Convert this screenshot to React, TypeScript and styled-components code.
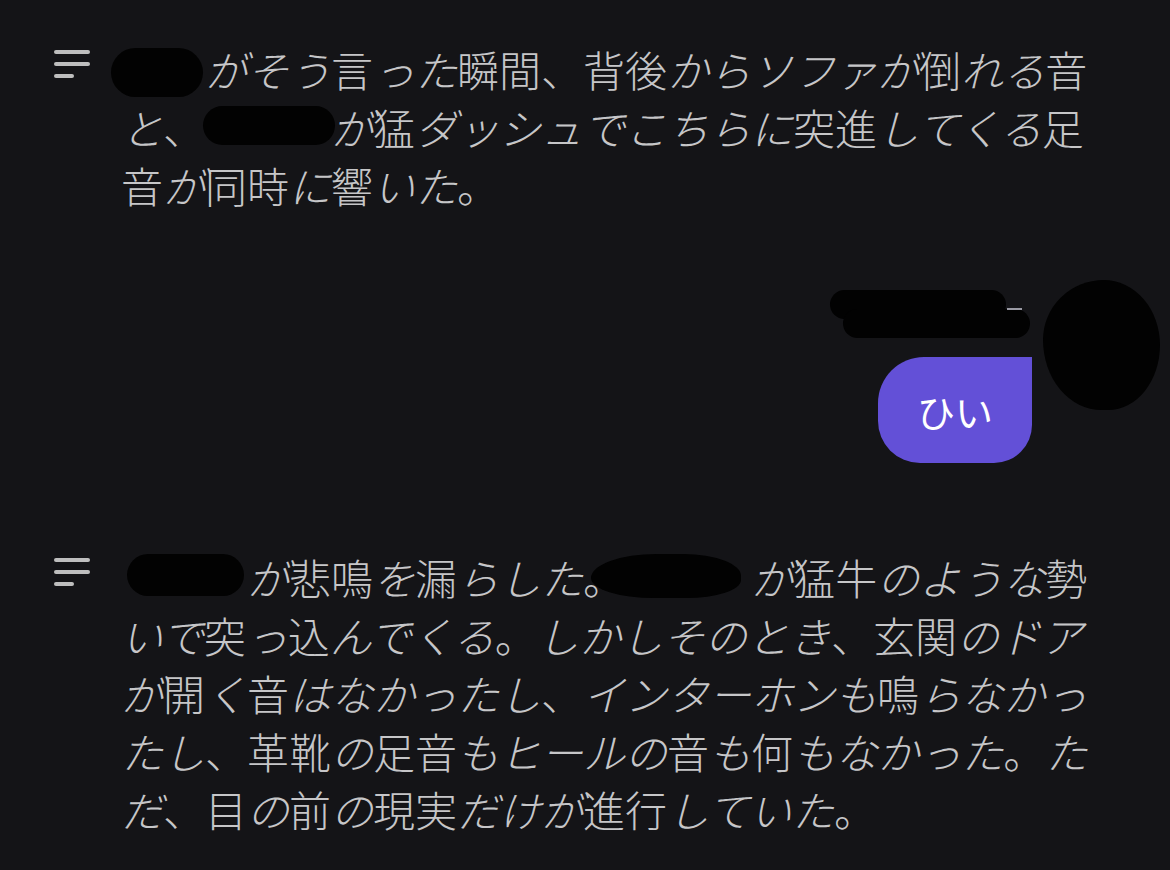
import React from "react"
import styled, { createGlobalStyle } from "styled-components"

const GlobalStyle = createGlobalStyle`
  html, body {
    margin: 0;
    padding: 0;
    background: #141417;
  }
  body {
    font-family: "Noto Sans CJK JP", "Noto Sans", sans-serif;
    color: #c6c6c8;
  }
`

// kana runs are drawn slanted, kanji and punctuation stay upright
const KANA = /([\u3041-\u3096\u309B-\u309F\u30A1-\u30FA\u30FC-\u30FF]+)/

const renderMixed = (text: string) =>
  text.split(KANA).map((part, i) =>
    KANA.test(part) ? <Kana key={i}>{part}</Kana> : <React.Fragment key={i}>{part}</React.Fragment>
  )

interface IRedact {
  chars: number
  $l: number
  $r: number
  $t: number
  $b: number
  $round?: string
}

// a hidden name: the text is kept but covered by a marker stroke
const Redacted: React.FC<IRedact> = ({ chars, ...rest }) => (
  <Redact {...rest}>{"〇".repeat(chars)}</Redact>
)

const MenuIcon = () => (
  <svg width="36" height="28" viewBox="0 0 36 28">
    <g stroke="#bebebe" strokeWidth="4" strokeLinecap="round">
      <line x1="2" y1="2" x2="34" y2="2" />
      <line x1="2" y1="14" x2="34" y2="14" />
      <line x1="2" y1="26" x2="18" y2="26" />
    </g>
  </svg>
)

const AssistantMessage: React.FC<{ top: number; children: React.ReactNode }> = ({ top, children }) => (
  <AssistantRow $top={top}>
    <IconSlot>
      <MenuIcon />
    </IconSlot>
    <Story>{children}</Story>
  </AssistantRow>
)

export default function App() {
  return (
    <>
      <GlobalStyle />
      <Thread>
        <AssistantMessage top={0}>
          <Redacted chars={2} $l={-10} $r={2} $t={10} $b={2} />
          {renderMixed("がそう言った瞬間、背後からソファが倒れる音と、")}
          <Redacted chars={3} $l={-2} $r={-4} $t={10} $b={12} />
          {renderMixed("が猛ダッシュでこちらに突進してくる足音が同時に響いた。")}
        </AssistantMessage>

        <UserRow>
          <UserColumn>
            <NameTag>
              <NameDash />
            </NameTag>
            <Bubble>ひい</Bubble>
          </UserColumn>
          <Avatar />
        </UserRow>

        <AssistantMessage top={85}>
          <Redacted chars={3} $l={6} $r={3} $t={8} $b={11} />
          {renderMixed("が悲鳴を漏らした。")}
          <Redacted chars={3} $l={-34} $r={10} $t={8} $b={9} $round="48% 42% 40% 46% / 60% 55% 45% 50%" />
          {renderMixed(
            "が猛牛のような勢いで突っ込んでくる。しかしそのとき、玄関のドアが開く音はなかったし、インターホンも鳴らなかったし、革靴の足音もヒールの音も何もなかった。ただ、目の前の現実だけが進行していた。"
          )}
        </AssistantMessage>
      </Thread>
    </>
  )
}

const Thread = styled.main`
  display: flex;
  flex-direction: column;
  padding-top: 40px;
`

const AssistantRow = styled.section<{ $top: number }>`
  display: flex;
  align-items: flex-start;
  gap: 31px;
  padding-left: 54px;
  margin-top: ${(p) => p.$top}px;
`

const IconSlot = styled.div`
  flex: none;
  display: flex;
  padding-top: 10px;
`

const Story = styled.p`
  margin: 0;
  width: 990px;
  font-size: 42px;
  line-height: 58px;
  font-weight: 300;
  color: #c6c6c8;
`

const Kana = styled.span`
  font-style: italic;
`

const Redact = styled.span<Omit<IRedact, "chars">>`
  position: relative;
  color: transparent;

  &::after {
    content: "";
    position: absolute;
    left: ${(p) => p.$l}px;
    right: ${(p) => p.$r}px;
    top: ${(p) => p.$t}px;
    bottom: ${(p) => p.$b}px;
    background: #020202;
    border-radius: ${(p) => p.$round ?? "999px"};
  }
`

const UserRow = styled.section`
  display: flex;
  justify-content: flex-end;
  align-items: flex-start;
  gap: 11px;
  padding-right: 10px;
  margin-top: 66px;
`

const UserColumn = styled.div`
  display: flex;
  flex-direction: column;
  align-items: flex-end;
`

const NameTag = styled.div`
  position: relative;
  width: 200px;
  height: 48px;
  margin-top: 10px;
  margin-right: 2px;

  &::before,
  &::after {
    content: "";
    position: absolute;
    background: #020202;
    border-radius: 999px;
  }
  &::before {
    left: 0;
    top: 0;
    width: 176px;
    height: 29px;
  }
  &::after {
    left: 13px;
    top: 19px;
    right: 0;
    height: 29px;
  }
`

const NameDash = styled.span`
  position: absolute;
  left: 177px;
  top: 18px;
  width: 15px;
  height: 2px;
  background: #9a9aa4;
  z-index: 1;
`

const Bubble = styled.div`
  margin-top: 19px;
  height: 106px;
  padding: 0 39px;
  display: flex;
  align-items: center;
  background: #6350d7;
  color: #ffffff;
  font-size: 38px;
  border-radius: 46px 0 38px 42px;
`

const Avatar = styled.div`
  width: 117px;
  height: 130px;
  background: #020202;
  border-radius: 52% 48% 44% 50% / 46% 50% 50% 54%;
`
